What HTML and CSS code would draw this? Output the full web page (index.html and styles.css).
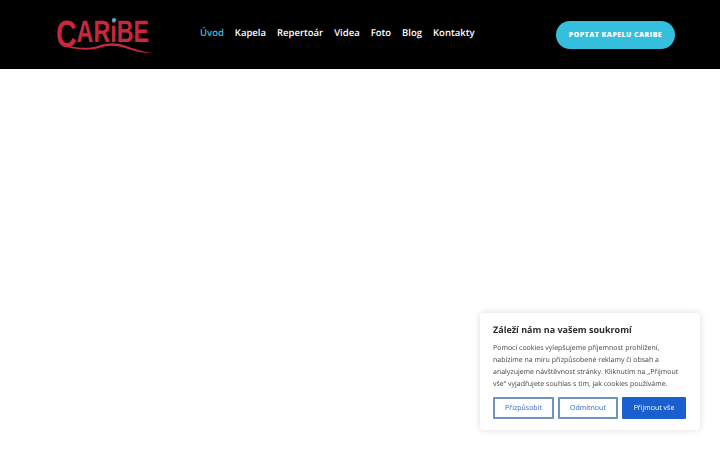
FILE: index.html
```html
<!DOCTYPE html><html lang="cs"><head>
    <meta charset="UTF-8">
    <meta name="viewport" content="width=device-width, initial-scale=1.0">
    <title>Caribe</title>
    <link rel="stylesheet" href="styles.css">
</head>
<body>
    <!-- Header -->
    <header class="site-header">
        <a class="logo" href="#">
            <svg width="98" height="40" viewBox="0 0 98 40">
                <text class="logo-text" transform="scale(0.75 1)" x="0" y="28"><tspan class="logo-c" dy="5">C</tspan><tspan dy="-5">ARiBE</tspan></text>
                <circle cx="58" cy="6" r="2" fill="#3bbfdc"/>
                <path d="M5 30 C16 34 34 35 42 32 C50 29 60 28 70 32 C79 35 88 38 96 39 C86 39 78 37 69 34 C60 31 51 31 43 34 C33 37 14 36 5 30 Z" fill="#c8283c"/>
            </svg>
        </a>
        <nav class="main-nav">
            <a class="active" href="#">Úvod</a>
            <a href="#">Kapela</a>
            <a href="#">Repertoár</a>
            <a href="#">Videa</a>
            <a href="#">Foto</a>
            <a href="#">Blog</a>
            <a href="#">Kontakty</a>
        </nav>
        <a class="cta" href="#">POPTAT KAPELU CARIBE</a>
    </header>

    <!-- Cookie banner -->
    <div class="cookie-box">
        <div class="cookie-title">Záleží nám na vašem soukromí</div>
        <p class="cookie-text">Pomocí cookies vylepšujeme příjemnost prohlížení, nabízíme na míru přizpůsobené reklamy či obsah a analyzujeme návštěvnost stránky. Kliknutím na „Přijmout vše“ vyjadřujete souhlas s tím, jak cookies používáme.</p>
        <div class="cookie-buttons">
            <button class="btn btn-outline btn-first">Přizpůsobit</button>
            <button class="btn btn-outline">Odmítnout</button>
            <button class="btn btn-primary">Přijmout vše</button>
        </div>
    </div>
</body></html>
```

FILE: styles.css
```css
body {
    margin: 0;
    height: 450px;
    overflow: hidden;
    background-color: #fff;
    font-family: "Open Sans", sans-serif;
    color: #333;
    text-rendering: geometricPrecision;
}

/* Header */
.site-header {
    display: flex;
    align-items: center;
    height: 69px;
    padding: 0 45px 0 56px;
    background-color: #000;
}

.logo {
    display: block;
    width: 98px;
    height: 40px;
    margin-top: -1px;
}

.logo svg {
    display: block;
    overflow: visible;
}

.logo-text {
    font-family: "Liberation Sans", sans-serif;
    font-size: 31px;
    font-weight: bold;
    fill: #c8283c;
}

.logo-c {
    font-size: 38px;
}

.main-nav {
    display: flex;
    gap: 11px;
    margin-left: 46px;
    margin-top: -3px;
}

.main-nav a {
    font-size: 9.500px;
    font-weight: 600;
    line-height: 20px;
    color: #fff;
    text-decoration: none;
}

.main-nav a.active {
    color: #3bbfdc;
}

.cta {
    display: block;
    width: 119px;
    height: 28px;
    margin-left: auto;
    margin-top: 1px;
    border-radius: 14px;
    background-color: #35bfdd;
    color: #fff;
    font-size: 7px;
    font-weight: 800;
    letter-spacing: 0.45px;
    line-height: 29px;
    text-align: center;
    text-decoration: none;
    white-space: nowrap;
}

/* Cookie banner */
.cookie-box {
    position: fixed;
    right: 20px;
    bottom: 20px;
    box-sizing: border-box;
    width: 220px;
    height: 117px;
    padding: 10px 13px;
    background-color: #fff;
    border-radius: 4px;
    box-shadow: 0 0 7px rgba(0, 0, 0, 0.14);
}

.cookie-title {
    font-size: 9px;
    font-weight: 700;
    line-height: 14px;
    color: #2d2d2d;
}

.cookie-text {
    margin: 6px 0 6px;
    font-size: 7px;
    line-height: 12px;
    color: #444;
}

.cookie-buttons {
    display: flex;
    gap: 4px;
}

.btn {
    height: 22px;
    padding: 0;
    border-radius: 1px;
    font-family: "Open Sans", sans-serif;
    font-size: 7px;
    text-rendering: geometricPrecision;
    cursor: pointer;
}

.btn-outline {
    width: 60px;
    background-color: #fff;
    border: 2px solid #6d92c6;
    color: #2c66c2;
}

.btn-first {
    width: 61px;
}

.btn-primary {
    width: 64px;
    background-color: #1a5fd0;
    border: 1px solid #1a5fd0;
    color: #fff;
}
```
